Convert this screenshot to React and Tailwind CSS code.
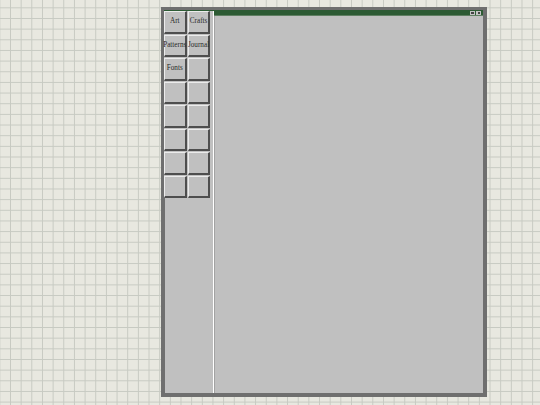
import React from "react";

const labels = ["Art", "Crafts", "Patterns", "Journal", "Fonts"];

function Btn({ label }) {
  return (
    <div className="flex items-center justify-center bg-[#c0c0c0] border-t border-l border-[#ececec] border-b-2 border-r-2 border-b-[#4e4e4e] border-r-[#4e4e4e] text-[7.2px] leading-none text-[#2a2a2a] whitespace-nowrap [font-family:'Liberation_Serif',serif]">
      {label}
    </div>
  );
}

export default function App() {
  const cells = Array.from({ length: 16 }, (_, i) => labels[i] || "");
  return (
    <div className="w-full h-[405px] overflow-hidden bg-[#e8e8e0] bg-[linear-gradient(to_right,#c7cac2_1px,transparent_1px),linear-gradient(to_bottom,#c7cac2_1px,transparent_1px)] bg-[size:10.667px_10.667px] bg-[position:10px_7.33px]">
      <div className="ml-[161px] pt-[7px]">
        <div className="w-[326px] h-[390px] bg-[#6f6f6f] pl-[3px] pt-[3px] pr-[4px] pb-[4px] flex flex-col">
          <div className="flex-1 flex flex-col bg-[#c0c0c0] border-t border-[#2d5b34]">
            <div className="flex-1 flex">
              <div className="w-[49px] flex flex-col">
                <div className="grid grid-cols-[22.5px_22.5px] auto-rows-[22.5px] gap-x-[1.3px] gap-y-[1px] w-[46.5px]">
                  {cells.map((c, i) => (
                    <Btn key={i} label={c} />
                  ))}
                </div>
                <div className="flex-1 border-l-2 border-[#6f6f6f] -ml-[1px]" />
              </div>
              <div className="w-px bg-white" />
              <div className="flex-1 flex flex-col">
                <div className="h-[5px] bg-[#2d5b34] border-b border-[#5f7f62] flex items-center justify-end pr-[2px] gap-[1px]">
                  <div className="w-[5px] h-[4px] bg-[#c4c4c4] flex items-center justify-center">
                    <div className="w-[3px] h-[2px] border border-[#444]" />
                  </div>
                  <div className="w-[5px] h-[4px] bg-[#c4c4c4] flex items-center justify-center">
                    <div className="w-[2px] h-[2px] bg-[#444]" />
                  </div>
                </div>
                <div className="flex-1 border-l border-[#a2a2a2]" />
              </div>
            </div>
          </div>
        </div>
      </div>
    </div>
  );
}
